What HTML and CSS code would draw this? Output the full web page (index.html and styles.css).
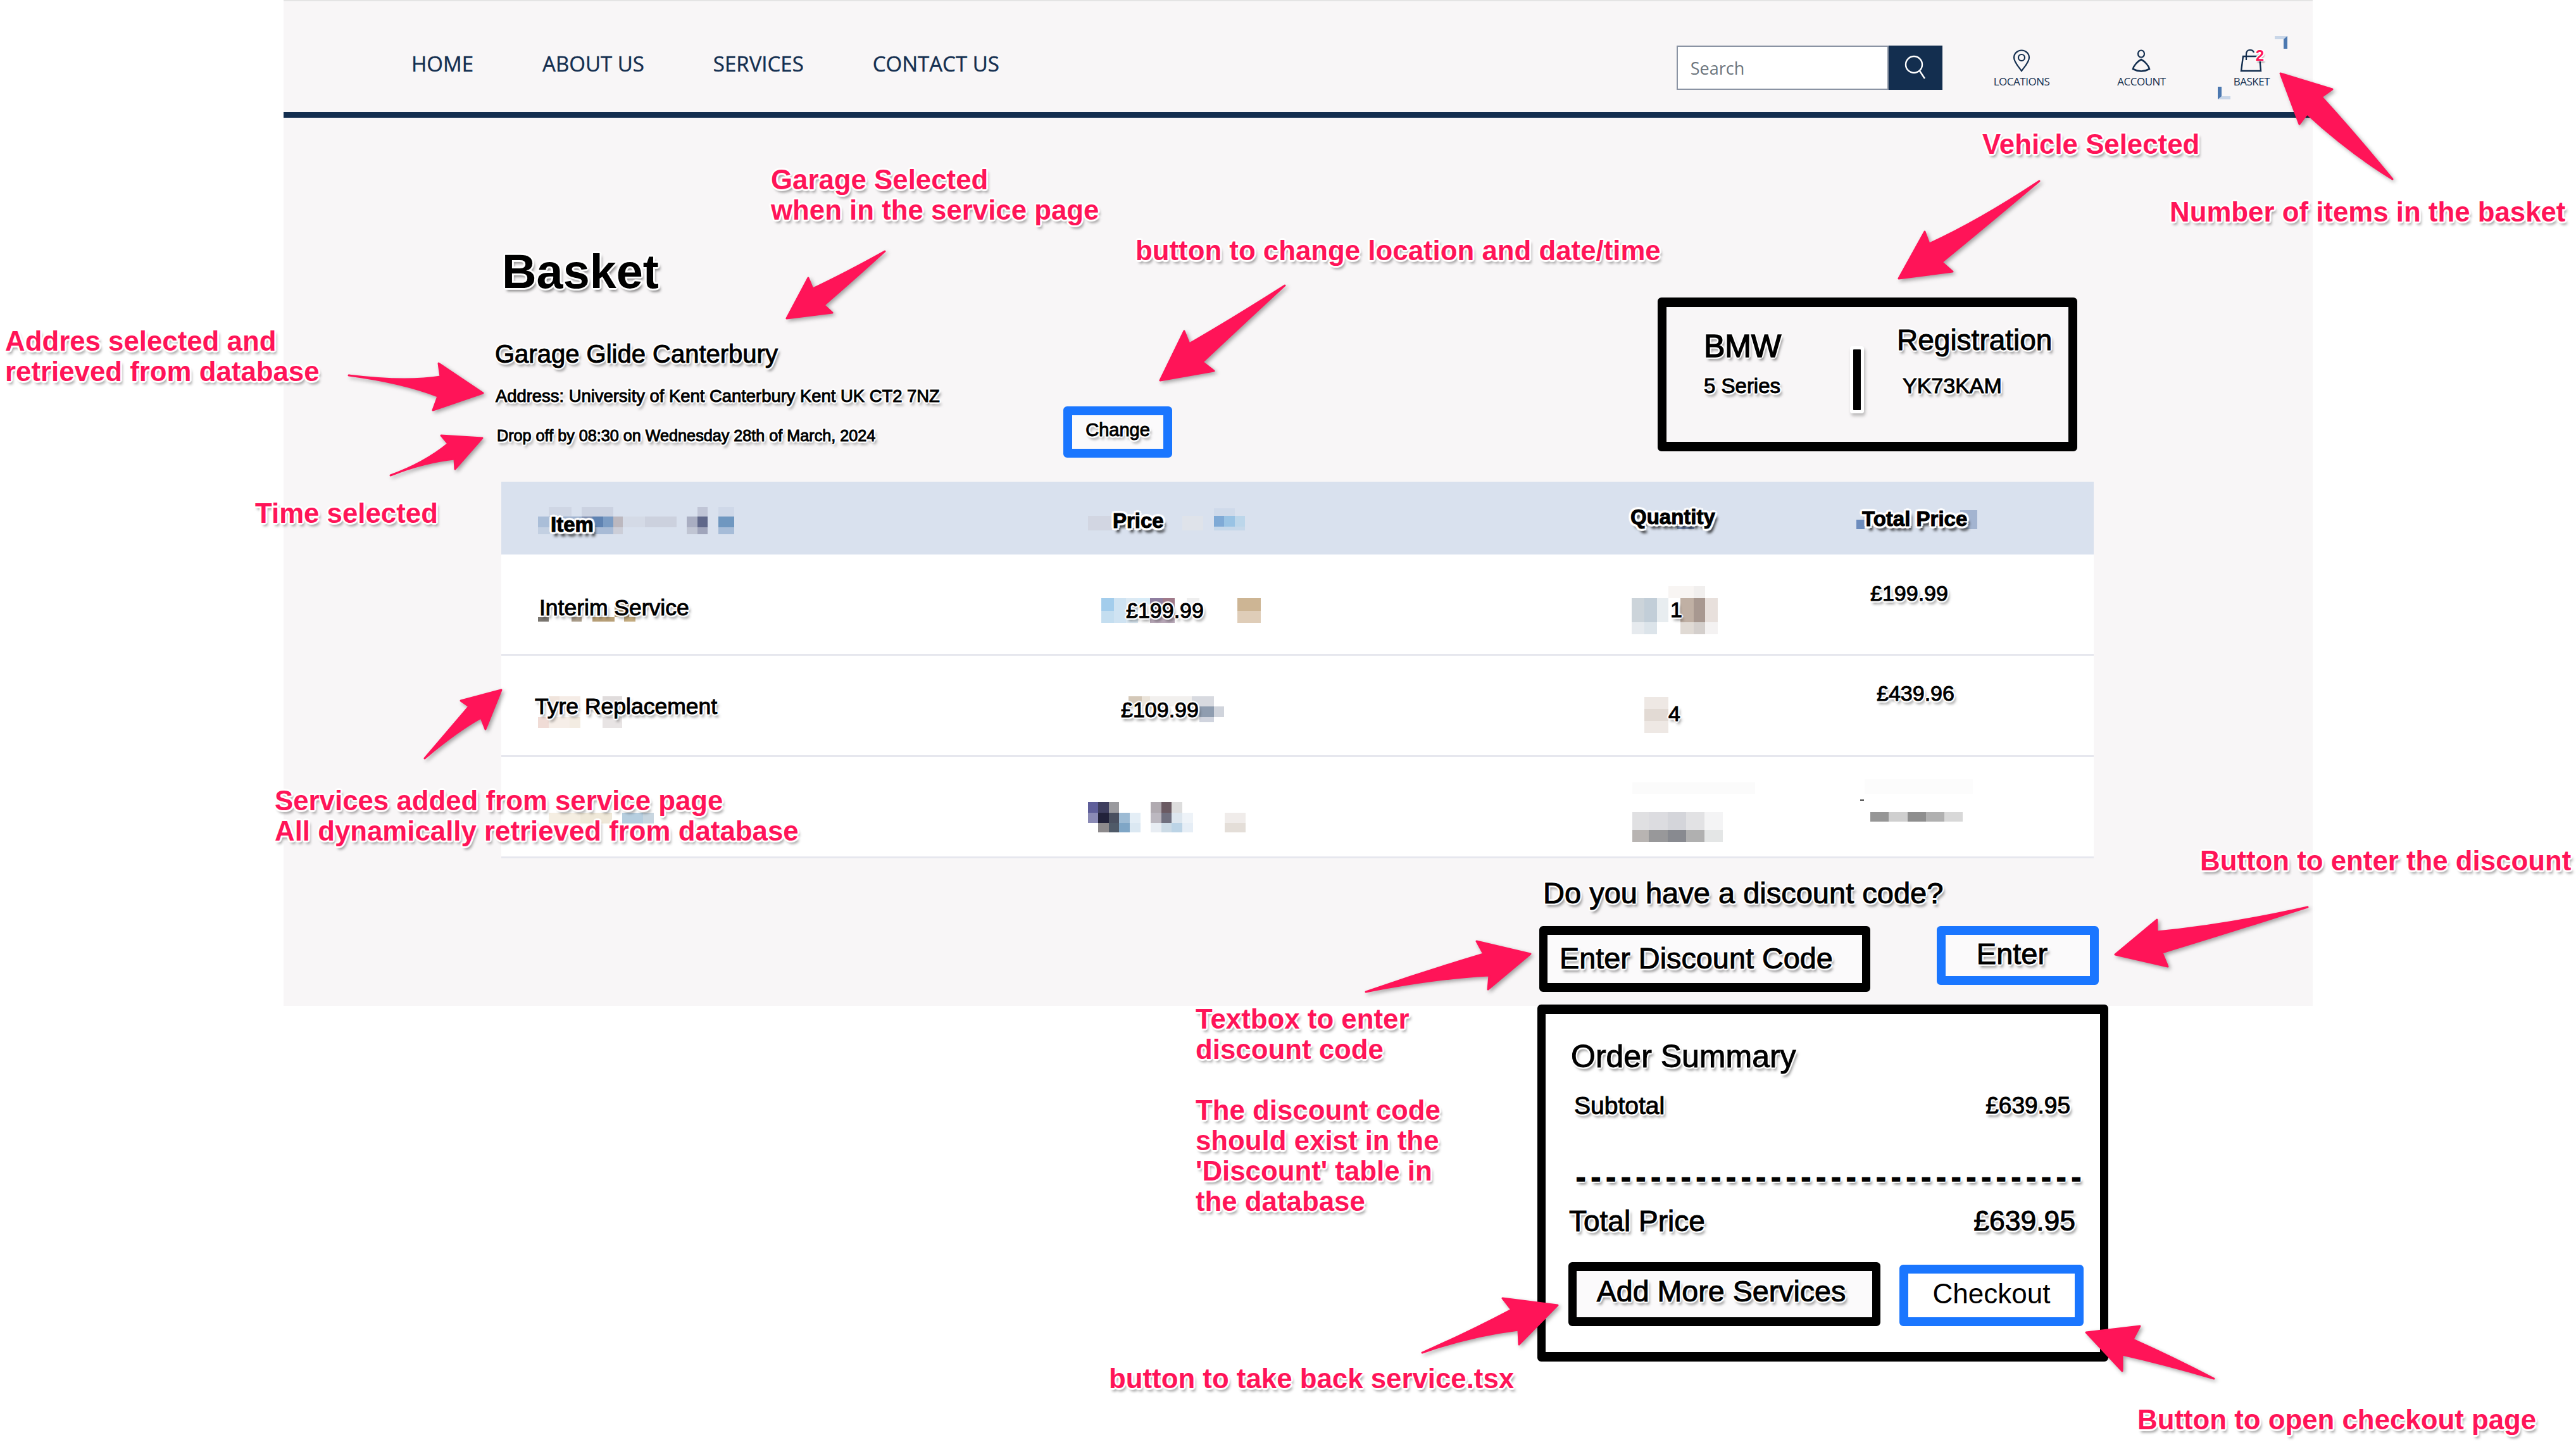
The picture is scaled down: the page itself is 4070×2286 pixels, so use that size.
FILE: index.html
```html
<!DOCTYPE html>
<html lang="en">
<head>
    <meta charset="UTF-8">
    <title>Basket</title>
    <link rel="stylesheet" href="styles.css">
</head>
<body>
<div class="canvas">
    <!-- blurred out leftovers behind the table text -->
    <svg class="layer mosaic" viewBox="0 0 4070 2286">
        <!-- header: Item -->
        <rect x="850" y="816" width="19" height="17" fill="#aabed8"/><rect x="869" y="816" width="50" height="17" fill="#9fb2cf"/><rect x="919" y="816" width="17" height="17" fill="#7f8fb0"/><rect x="936" y="816" width="17" height="17" fill="#5f83b2"/><rect x="953" y="816" width="16" height="17" fill="#7b9cc4"/><rect x="969" y="816" width="15" height="17" fill="#bcb8bf"/><rect x="984" y="816" width="35" height="17" fill="#d4dae6"/><rect x="1019" y="816" width="50" height="17" fill="#ccd1de"/><rect x="1085" y="816" width="17" height="17" fill="#a9aec2"/><rect x="1102" y="816" width="16" height="17" fill="#60688a"/><rect x="1135" y="816" width="25" height="17" fill="#6f97c0"/>
        <rect x="867" y="801" width="36" height="15" fill="#cfd6e4"/><rect x="919" y="801" width="50" height="15" fill="#cbd2e1"/><rect x="1102" y="801" width="16" height="15" fill="#c0c5d6"/><rect x="1135" y="801" width="25" height="15" fill="#cfd8e8"/>
        <rect x="850" y="833" width="36" height="11" fill="#c3d0e2"/><rect x="936" y="833" width="33" height="11" fill="#a8bbd6"/><rect x="969" y="833" width="15" height="11" fill="#ccced8"/><rect x="1085" y="833" width="17" height="11" fill="#c0c5d3"/><rect x="1102" y="833" width="16" height="11" fill="#a0a5bb"/><rect x="1135" y="833" width="25" height="11" fill="#a6bcd8"/>
        <!-- header: Price -->
        <rect x="1719" y="815" width="39" height="23" fill="#d2d6e2"/><rect x="1868" y="815" width="33" height="23" fill="#dfe3ea"/><rect x="1918" y="803" width="33" height="12" fill="#cfdaea"/><rect x="1918" y="815" width="16" height="17" fill="#7faad6"/><rect x="1934" y="815" width="17" height="17" fill="#99c3e4"/><rect x="1951" y="815" width="16" height="17" fill="#bcd6ea"/><rect x="1918" y="832" width="49" height="6" fill="#c6d8ea"/>
        <!-- header: Quantity, Total Price -->
        <rect x="2650" y="831" width="27" height="5" fill="#7a8fb8"/><rect x="2933" y="821" width="13" height="15" fill="#6d8cbd"/><rect x="3097" y="806" width="27" height="30" fill="#a3b4d0"/>
        <!-- row 1 -->
        <rect x="971" y="950" width="23" height="25" fill="#b89c70"/><rect x="850" y="975" width="17" height="7" fill="#7a7670"/><rect x="903" y="975" width="16" height="7" fill="#a99c8a"/><rect x="936" y="975" width="35" height="7" fill="#b8a078"/><rect x="986" y="975" width="18" height="7" fill="#c4ac80"/>
        <rect x="1740" y="945" width="20" height="20" fill="#a3cdec"/><rect x="1740" y="965" width="20" height="19" fill="#c4def0"/><rect x="1760" y="945" width="19" height="39" fill="#cfe3f2"/><rect x="1779" y="945" width="19" height="39" fill="#dceaf4"/><rect x="1798" y="945" width="19" height="10" fill="#d8ecf8"/><rect x="1817" y="945" width="20" height="20" fill="#8e7ea0"/><rect x="1837" y="945" width="19" height="20" fill="#a07a8a"/><rect x="1817" y="965" width="39" height="19" fill="#b8a8b8"/><rect x="1875" y="945" width="20" height="15" fill="#eeeeee"/><rect x="1955" y="945" width="37" height="20" fill="#cdb594"/><rect x="1955" y="965" width="37" height="19" fill="#dfcdb8"/>
        <rect x="2578" y="945" width="20" height="38" fill="#ccd4da"/><rect x="2598" y="945" width="20" height="38" fill="#c2ced8"/><rect x="2618" y="945" width="18" height="38" fill="#e8edf0"/><rect x="2655" y="945" width="21" height="38" fill="#c0b0a4"/><rect x="2676" y="945" width="18" height="38" fill="#a89890"/><rect x="2694" y="945" width="20" height="38" fill="#e8e0dc"/><rect x="2636" y="926" width="40" height="19" fill="#f8f5f3"/><rect x="2676" y="926" width="18" height="19" fill="#f1efee"/><rect x="2578" y="983" width="20" height="19" fill="#e6eaee"/><rect x="2598" y="983" width="20" height="19" fill="#dce4ea"/><rect x="2655" y="983" width="21" height="19" fill="#e0dad4"/><rect x="2676" y="983" width="18" height="19" fill="#d4cfcc"/><rect x="2694" y="983" width="20" height="19" fill="#f4f2f2"/>
        <!-- row 2 -->
        <rect x="867" y="1100" width="17" height="16" fill="#f0e4dc"/><rect x="884" y="1100" width="33" height="16" fill="#f5ece6"/><rect x="952" y="1100" width="31" height="16" fill="#e0dcdc"/><rect x="850" y="1133" width="17" height="17" fill="#f0dcd6"/><rect x="867" y="1133" width="33" height="17" fill="#f6eee8"/><rect x="900" y="1133" width="17" height="17" fill="#f3ece2"/><rect x="952" y="1133" width="31" height="17" fill="#e8e4e4"/>
        <rect x="1783" y="1100" width="21" height="16" fill="#d4c8b8"/><rect x="1804" y="1100" width="13" height="16" fill="#ebe4da"/><rect x="1817" y="1100" width="66" height="16" fill="#f2f0ee"/><rect x="1883" y="1100" width="35" height="16" fill="#d8dae0"/><rect x="1895" y="1116" width="23" height="17" fill="#8f9db0"/><rect x="1918" y="1116" width="16" height="17" fill="#d0d4dc"/><rect x="1895" y="1133" width="23" height="8" fill="#d0d4de"/>
        <rect x="2598" y="1101" width="38" height="19" fill="#eee8e4"/><rect x="2598" y="1120" width="38" height="19" fill="#e2dad4"/><rect x="2598" y="1139" width="38" height="19" fill="#eee8e4"/>
        <!-- row 3 -->
        <rect x="867" y="1284" width="50" height="17" fill="#f5eee2"/><rect x="917" y="1284" width="50" height="17" fill="#efe8d8"/><rect x="983" y="1284" width="33" height="17" fill="#b6cedf"/><rect x="1016" y="1284" width="17" height="17" fill="#c8d6e0"/>
        <rect x="1719" y="1267" width="16" height="17" fill="#5f5f9a"/><rect x="1735" y="1267" width="17" height="17" fill="#3e3e5e"/><rect x="1752" y="1267" width="16" height="17" fill="#9a9a9e"/><rect x="1818" y="1267" width="17" height="17" fill="#b0aab0"/><rect x="1835" y="1267" width="16" height="17" fill="#6a5a62"/><rect x="1851" y="1267" width="17" height="17" fill="#dddddd"/>
        <rect x="1719" y="1284" width="16" height="16" fill="#8a8ab5"/><rect x="1735" y="1284" width="17" height="16" fill="#22223a"/><rect x="1752" y="1284" width="16" height="16" fill="#4a5060"/><rect x="1768" y="1284" width="17" height="16" fill="#9dbbd4"/><rect x="1785" y="1284" width="17" height="16" fill="#e4eef6"/><rect x="1818" y="1284" width="17" height="16" fill="#bcb8c0"/><rect x="1835" y="1284" width="16" height="16" fill="#70707f"/><rect x="1851" y="1284" width="17" height="16" fill="#dde6ee"/><rect x="1868" y="1284" width="17" height="16" fill="#eef3f8"/><rect x="1935" y="1284" width="33" height="16" fill="#f0ecea"/>
        <rect x="1735" y="1300" width="17" height="15" fill="#8d8a8c"/><rect x="1752" y="1300" width="16" height="15" fill="#4f5a68"/><rect x="1768" y="1300" width="17" height="15" fill="#7fa6c6"/><rect x="1785" y="1300" width="17" height="15" fill="#dbe8f2"/><rect x="1818" y="1300" width="17" height="15" fill="#e8edf3"/><rect x="1835" y="1300" width="16" height="15" fill="#ccdbe6"/><rect x="1851" y="1300" width="17" height="15" fill="#bcd4e6"/><rect x="1868" y="1300" width="17" height="15" fill="#e6eef6"/><rect x="1935" y="1300" width="33" height="15" fill="#e4ded8"/>
        <rect x="2579" y="1236" width="194" height="18" fill="#fbfbfb"/><rect x="2579" y="1283" width="26" height="28" fill="#e0e0e2"/><rect x="2605" y="1283" width="30" height="28" fill="#dcdce0"/><rect x="2635" y="1283" width="29" height="28" fill="#d4d5da"/><rect x="2664" y="1283" width="29" height="28" fill="#e2e2e4"/><rect x="2693" y="1283" width="29" height="28" fill="#f4f4f5"/>
        <rect x="2579" y="1311" width="26" height="19" fill="#b8b4b2"/><rect x="2605" y="1311" width="30" height="19" fill="#98989a"/><rect x="2635" y="1311" width="29" height="19" fill="#888a90"/><rect x="2664" y="1311" width="29" height="19" fill="#b0b0b0"/><rect x="2693" y="1311" width="29" height="19" fill="#e4e6e6"/>
        <rect x="2946" y="1231" width="171" height="23" fill="#fcfcfc"/><rect x="2939" y="1263" width="6" height="2" fill="#444444"/><rect x="2955" y="1283" width="29" height="15" fill="#969696"/><rect x="2984" y="1283" width="30" height="15" fill="#cfcfcf"/><rect x="3014" y="1283" width="29" height="15" fill="#8e8e8e"/><rect x="3043" y="1283" width="29" height="15" fill="#b0b0b0"/><rect x="3072" y="1283" width="29" height="15" fill="#d8d8d8"/>
    </svg>

    <div class="page">
        <nav class="nav">
            <div class="nav-links">
                <a>HOME</a>
                <a>ABOUT US</a>
                <a>SERVICES</a>
                <a>CONTACT US</a>
            </div>
            <div class="nav-tools">
                <form class="search">
                    <input type="text" placeholder="Search">
                    <button type="button" aria-label="Search">
                        <svg viewBox="0 0 34 40" width="34" height="40"><ellipse cx="15" cy="15" rx="13" ry="13" fill="none" stroke="#fff" stroke-width="2.4"/><path d="M24 25 L32 37" stroke="#fff" stroke-width="2.4" fill="none"/></svg>
                    </button>
                </form>
                <div class="tool">
                    <svg viewBox="0 0 28 36" width="28" height="36"><path d="M14 34 C9 27 2 20 2 13 A12 11.5 0 0 1 26 13 C26 20 19 27 14 34Z" fill="none" stroke="#132e4f" stroke-width="2.2"/><circle cx="14" cy="13" r="5" fill="none" stroke="#132e4f" stroke-width="2.2"/></svg>
                    <span>LOCATIONS</span>
                </div>
                <div class="tool">
                    <svg viewBox="0 0 32 36" width="32" height="36"><ellipse cx="16" cy="7" rx="5" ry="5.5" fill="none" stroke="#132e4f" stroke-width="2.2"/><path d="M16 16 C10 19 4 26 3 31 Q16 38 29 31 C28 26 22 19 16 16Z" fill="none" stroke="#132e4f" stroke-width="2.6"/></svg>
                    <span>ACCOUNT</span>
                </div>
                <div class="tool tool-basket">
                    <svg viewBox="0 0 36 36" width="36" height="36"><path d="M5 11 H31 L33 34 H2Z" fill="none" stroke="#132e4f" stroke-width="2.4"/><path d="M10 17 V8 Q10 1 16 1 Q21 1 22 5" fill="none" stroke="#132e4f" stroke-width="2.2"/></svg>
                    <b class="count">2</b>
                    <span>BASKET</span>
                    <i class="corner corner-top"></i>
                    <i class="corner corner-bottom"></i>
                </div>
            </div>
        </nav>

        <section class="top">
            <div class="details">
                <h1 class="halo">Basket</h1>
                <h3 class="halo">Garage Glide Canterbury</h3>
                <p class="halo address">Address: University of Kent Canterbury Kent UK CT2 7NZ</p>
                <p class="halo dropoff">Drop off by 08:30 on Wednesday 28th of March, 2024</p>
            </div>
            <button class="btn-blue btn-change halo">Change</button>
            <div class="vehicle">
                <div class="vehicle-make">
                    <div class="halo make">BMW</div>
                    <div class="halo model">5 Series</div>
                </div>
                <div class="vehicle-sep"></div>
                <div class="vehicle-reg">
                    <div class="halo reg-label">Registration</div>
                    <div class="halo reg-number">YK73KAM</div>
                </div>
            </div>
        </section>

        <div class="basket-table">
            <div class="row row-head">
                <div class="cell c1">Item</div>
                <div class="cell c2">Price</div>
                <div class="cell c3">Quantity</div>
                <div class="cell c4">Total Price</div>
            </div>
            <div class="row row-one">
                <div class="cell c1">Interim Service</div>
                <div class="cell c2">£199.99</div>
                <div class="cell c3">1</div>
                <div class="cell c4">£199.99</div>
            </div>
            <div class="row row-two">
                <div class="cell c1">Tyre Replacement</div>
                <div class="cell c2">£109.99</div>
                <div class="cell c3">4</div>
                <div class="cell c4">£439.96</div>
            </div>
            <div class="row row-three"></div>
        </div>

        <section class="discount">
            <div class="halo discount-q">Do you have a discount code?</div>
            <div class="discount-row">
                <div class="box-black discount-input halo">Enter Discount Code</div>
                <button class="btn-blue btn-enter halo">Enter</button>
            </div>

            <div class="order">
                <div class="halo order-title">Order Summary</div>
                <div class="order-line halo subtotal"><span class="subtotal-label">Subtotal</span><span>£639.95</span></div>
                <div class="halo dashes">----------------------------------</div>
                <div class="order-line halo total"><span>Total Price</span><span class="total-value">£639.95</span></div>
                <div class="order-actions">
                    <button class="box-black btn-more halo">Add More Services</button>
                    <button class="btn-blue btn-checkout">Checkout</button>
                </div>
            </div>
        </section>
    </div>

    <!-- annotations -->
    <div class="note n-garage">Garage Selected<br>when in the service page</div>
    <div class="note n-change">button to change location and date/time</div>
    <div class="note n-vehicle">Vehicle Selected</div>
    <div class="note n-items">Number of items in the basket</div>
    <div class="note n-address">Addres selected and<br>retrieved from database</div>
    <div class="note n-time">Time selected</div>
    <div class="note n-services">Services added from service page<br>All dynamically retrieved from database</div>
    <div class="note n-enter">Button to enter the discount</div>
    <div class="note n-textbox">Textbox to enter<br>discount code<br><br>The discount code<br>should exist in the<br>'Discount' table in<br>the database</div>
    <div class="note n-back">button to take back service.tsx</div>
    <div class="note n-checkout">Button to open checkout page</div>

    <svg class="layer arrows" viewBox="0 0 4070 2286">
        <path d="M1398 397 Q1335 432 1284 456 L1277 439 L1243 503 L1315 494 L1302 482 Q1345 445 1398 397Z"/>
        <path d="M551 593 Q640 604 696 595 L693 574 L763 621 L684 648 L692 626 Q635 604 551 593Z"/>
        <path d="M617 751 Q670 732 708 701 L697 688 L762 692 L719 741 L718 725 Q670 730 617 751Z"/>
        <path d="M671 1198 Q712 1150 741 1116 L728 1107 L792 1090 L767 1152 L760 1134 Q722 1155 671 1198Z"/>
        <path d="M2030 451 Q1945 505 1879 543 L1871 523 L1833 601 L1918 586 L1900 572 Q1955 520 2030 451Z"/>
        <path d="M3222 286 Q3125 350 3048 385 L3041 366 L3000 440 L3085 429 L3068 414 Q3140 355 3222 286Z"/>
        <path d="M3780 283 Q3720 210 3668 153 L3685 141 L3603 116 L3633 196 L3645 180 Q3710 240 3780 283Z"/>
        <path d="M3646 1433 Q3515 1462 3408 1472 L3408 1453 L3342 1508 L3425 1527 L3416 1505 Q3515 1475 3646 1433Z"/>
        <path d="M2158 1567 Q2250 1535 2344 1507 L2333 1487 L2418 1507 L2351 1563 L2353 1541 Q2270 1545 2158 1567Z"/>
        <path d="M2247 2137 Q2320 2105 2388 2069 L2374 2051 L2461 2062 L2400 2124 L2399 2101 Q2325 2110 2247 2137Z"/>
        <path d="M3498 2178 Q3435 2145 3370 2116 L3381 2095 L3296 2105 L3353 2166 L3353 2140 Q3420 2155 3498 2178Z"/>
    </svg>
</div>
</body>
</html>
```
FILE: styles.css
```css
* {
    box-sizing: border-box;
}
body {
    margin: 0;
    background: #fff;
    font-family: "Liberation Sans", Arial, sans-serif;
    color: #000;
}
.canvas {
    position: relative;
    width: 4070px;
    height: 2286px;
    overflow: hidden;
}
.layer {
    position: absolute;
    left: 0;
    top: 0;
    width: 4070px;
    height: 2286px;
    pointer-events: none;
}
.mosaic {
    z-index: 0;
}
.arrows {
    z-index: 5;
    filter: drop-shadow(3px 3px 3px rgba(0, 0, 0, 0.35));
}
.arrows path {
    fill: #ff1458;
    stroke: #ff1458;
    stroke-width: 3;
    stroke-linejoin: round;
}

/* the white outline + soft shadow the annotation tool put on all text */
.halo,
.cell {
    -webkit-text-stroke: 1px #000;
    text-shadow:
        -2px -2px 1px #fff, 2px -2px 1px #fff, -2px 2px 1px #fff, 2px 2px 1px #fff,
        0 -3px 1px #fff, 0 3px 1px #fff, -3px 0 1px #fff, 3px 0 1px #fff,
        3px 5px 4px rgba(0, 0, 0, 0.5);
}

/* page frame */
.page {
    width: 3206px;
    height: 1589px;
    margin-left: 448px;
    background: #f8f6f7;
}

/* nav */
.nav {
    display: flex;
    height: 186px;
    padding-left: 202px;
    padding-right: 68px;
    border-top: 2px solid #e4e4e4;
    border-bottom: 9px solid #132e4f;
    font-family: "Open Sans", sans-serif;
    color: #132e4f;
}
.nav-links {
    display: flex;
    gap: 109px;
    padding-top: 77px;
    font-size: 33px;
    line-height: 44px;
    white-space: nowrap;
    -webkit-text-stroke: 0.4px #132e4f;
}
.nav-tools {
    display: flex;
    margin-left: auto;
    padding-top: 70px;
    gap: 107px;
}
.search {
    display: flex;
    width: 420px;
    height: 70px;
    margin-right: -26px;
}
.search input {
    width: 335px;
    height: 70px;
    padding: 0 20px;
    border: 2px solid #8a93a3;
    background: #fff;
    font-family: "Open Sans", sans-serif;
    font-size: 27px;
}
.search input::placeholder {
    color: #6c757d;
}
.search button {
    display: flex;
    align-items: center;
    justify-content: center;
    width: 85px;
    height: 70px;
    border: none;
    padding: 0;
    background: #132e4f;
}
.tool {
    position: relative;
    display: flex;
    flex-direction: column;
    align-items: center;
    margin-top: 6px;
    font-size: 17px;
    letter-spacing: -0.5px;
    line-height: 22px;
}
.tool span {
    margin-top: 4px;
}
.count {
    position: absolute;
    left: 35px;
    top: -2px;
    color: #ff1458;
    font-family: "Liberation Sans", sans-serif;
    font-size: 24px;
    line-height: 24px;
    text-shadow: -2px -1px 0 #fff, 2px -1px 0 #fff, -2px 1px 0 #fff, 2px 1px 0 #fff, 2px 3px 2px rgba(0, 0, 0, 0.3);
}
.corner {
    position: absolute;
    width: 20px;
    height: 20px;
}
.corner-top {
    left: 65px;
    top: -21px;
    border-top: 5px solid #c9d6e8;
    border-right: 6px solid #4c78b0;
}
.corner-bottom {
    left: -25px;
    top: 59px;
    border-bottom: 5px solid #c9d6e8;
    border-left: 6px solid #4c78b0;
}

/* basket heading + vehicle */
.top {
    display: flex;
    align-items: flex-start;
    height: 575px;
    padding-left: 334px;
}
.details {
    width: 898px;
    white-space: nowrap;
}
.details h1 {
    margin: 205px 0 0 11px;
    font-size: 75.6px;
    line-height: 76px;
    -webkit-text-stroke: 0;
}
.details h3 {
    margin: 72px 0 0 0;
    font-size: 40px;
    font-weight: 400;
    line-height: 40px;
}
.details p {
    margin: 32px 0 0 1px;
    font-size: 27.4px;
    line-height: 30px;
}
.details .dropoff {
    margin-left: 3px;
    font-size: 25.2px;
}
.btn-blue {
    border: 14px solid #1a76ff;
    border-radius: 6px;
    background: #fbfafb;
    padding: 0;
    font-family: inherit;
    color: #000;
}
.btn-change {
    width: 172px;
    height: 81px;
    margin-top: 456px;
    padding-bottom: 6px;
    font-size: 29px;
}
.vehicle {
    display: flex;
    align-items: flex-start;
    width: 663px;
    height: 243px;
    margin: 284px 0 0 767px;
    padding-left: 59px;
    border: solid #000;
    border-width: 15px 14px;
    border-radius: 6px;
    white-space: nowrap;
}
.vehicle-make {
    width: 236px;
    padding-top: 37px;
}
.make {
    font-size: 50px;
    line-height: 50px;
    -webkit-text-stroke: 1.6px #000;
}
.model {
    margin-top: 21px;
    font-size: 33px;
    line-height: 34px;
}
.vehicle-sep {
    width: 12px;
    height: 96px;
    margin-top: 67px;
    background: #000;
    box-shadow: 0 0 0 5px #fff, 2px 4px 5px 5px rgba(0, 0, 0, 0.25);
    border-radius: 1px;
}
.vehicle-reg {
    margin-left: 57px;
    padding-top: 29px;
}
.reg-label {
    font-size: 46px;
    line-height: 46px;
}
.reg-number {
    margin: 32px 0 0 9px;
    font-size: 34px;
    line-height: 34px;
}

/* table */
.basket-table {
    width: 2516px;
    margin-left: 344px;
}
.row {
    display: grid;
    grid-template-columns: 930px 820px 370px 396px;
    height: 160px;
    background: #fff;
    border-bottom: 3px solid #e6e7ee;
}
.cell {
    position: relative;
    z-index: 1;
    font-size: 34px;
    line-height: 40px;
    white-space: nowrap;
}
.row .c1 {
    font-size: 35.5px;
}
.row-head {
    height: 115px;
    background: #d9e1ee;
    border-bottom: none;
}
.row-head .cell {
    font-size: 33px;
    font-weight: 700;
    -webkit-text-stroke: 1px #000;
    text-shadow:
        -3px -3px 1px #fff, 3px -3px 1px #fff, -3px 3px 1px #fff, 3px 3px 1px #fff,
        0 -4px 1px #fff, 0 4px 1px #fff, -4px 0 1px #fff, 4px 0 1px #fff,
        4px 7px 4px rgba(0, 0, 0, 0.9);
}
.row-head .c1 { padding: 48px 0 0 78px; }
.row-head .c2 { padding: 42px 0 0 36px; }
.row-head .c3 { padding: 36px 0 0 34px; }
.row-head .c4 { padding: 39px 0 0 30px; }
.row-one .c1 { padding: 64px 0 0 60px; }
.row-one .c2 { padding: 68px 0 0 57px; }
.row-one .c3 { padding: 67px 0 0 97px; }
.row-one .c4 { padding: 41px 0 0 43px; }
.row-two .c1 { padding: 60px 0 0 53px; }
.row-two .c2 { padding: 65px 0 0 49px; }
.row-two .c3 { padding: 71px 0 0 94px; }
.row-two .c4 { padding: 39px 0 0 53px; }

/* discount + order summary */
.discount {
    margin: 32px 0 0 1984px;
    white-space: nowrap;
}
.discount-q {
    margin-left: 6px;
    font-size: 47px;
    line-height: 46px;
}
.discount-row {
    display: flex;
    align-items: flex-start;
    gap: 105px;
    margin-top: 29px;
}
.box-black {
    border: solid #000;
    border-width: 14px 13px;
    border-radius: 6px;
    background: #fbfafb;
    padding: 0;
    font-family: inherit;
    color: #000;
}
.discount-input {
    width: 523px;
    height: 104px;
    padding: 14px 0 0 19px;
    font-size: 46.8px;
    line-height: 46px;
}
.btn-enter {
    width: 256px;
    height: 93px;
    padding-right: 18px;
    padding-bottom: 6px;
    font-size: 47px;
}
.order {
    position: relative;
    width: 902px;
    height: 564px;
    margin: 20px 0 0 -3px;
    padding: 42px 0 0 40px;
    background: #fff;
    border: solid #000;
    border-width: 15px 13px;
    border-radius: 6px;
}
.order-title {
    font-size: 50px;
    line-height: 50px;
}
.order-line {
    display: flex;
    justify-content: space-between;
}
.subtotal {
    width: 784px;
    margin: 34px 0 0 5px;
    font-size: 37px;
    line-height: 38px;
}
.subtotal-label {
    font-size: 39px;
}
.dashes {
    margin: 70px 0 0 8px;
    font-size: 46px;
    font-weight: 700;
    line-height: 46px;
    letter-spacing: 8.4px;
    -webkit-text-stroke: 1.6px #000;
}
.total {
    width: 800px;
    margin: 24px 0 0 -3px;
    font-size: 46px;
    line-height: 46px;
}
.total-value {
    font-size: 44.5px;
}
.order-actions {
    display: flex;
    align-items: flex-end;
    gap: 30px;
    margin: 42px 0 0 -4px;
}
.btn-more {
    width: 493px;
    height: 101px;
    padding-right: 10px;
    padding-bottom: 10px;
    font-size: 46.6px;
}
.btn-checkout {
    width: 291px;
    height: 97px;
    padding-bottom: 6px;
    background: #fff;
    font-size: 44px;
}

/* pink annotations, free placed over the screenshot */
.note {
    position: absolute;
    z-index: 4;
    color: #ff1458;
    font-size: 43.8px;
    font-weight: 700;
    line-height: 48px;
    white-space: nowrap;
    text-shadow:
        -2px -2px 1px #fff, 2px -2px 1px #fff, -2px 2px 1px #fff, 2px 2px 1px #fff,
        0 -3px 1px #fff, 0 3px 1px #fff, -3px 0 1px #fff, 3px 0 1px #fff,
        3px 5px 4px rgba(0, 0, 0, 0.4);
}
.n-garage { left: 1218px; top: 260px; }
.n-change { left: 1794px; top: 372px; }
.n-vehicle { left: 3132px; top: 204px; }
.n-items { left: 3428px; top: 311px; }
.n-address { left: 8px; top: 515px; }
.n-time { left: 403px; top: 787px; }
.n-services { left: 434px; top: 1241px; }
.n-enter { left: 3476px; top: 1336px; }
.n-textbox { left: 1889px; top: 1586px; }
.n-back { left: 1752px; top: 2154px; }
.n-checkout { left: 3377px; top: 2219px; }
```
